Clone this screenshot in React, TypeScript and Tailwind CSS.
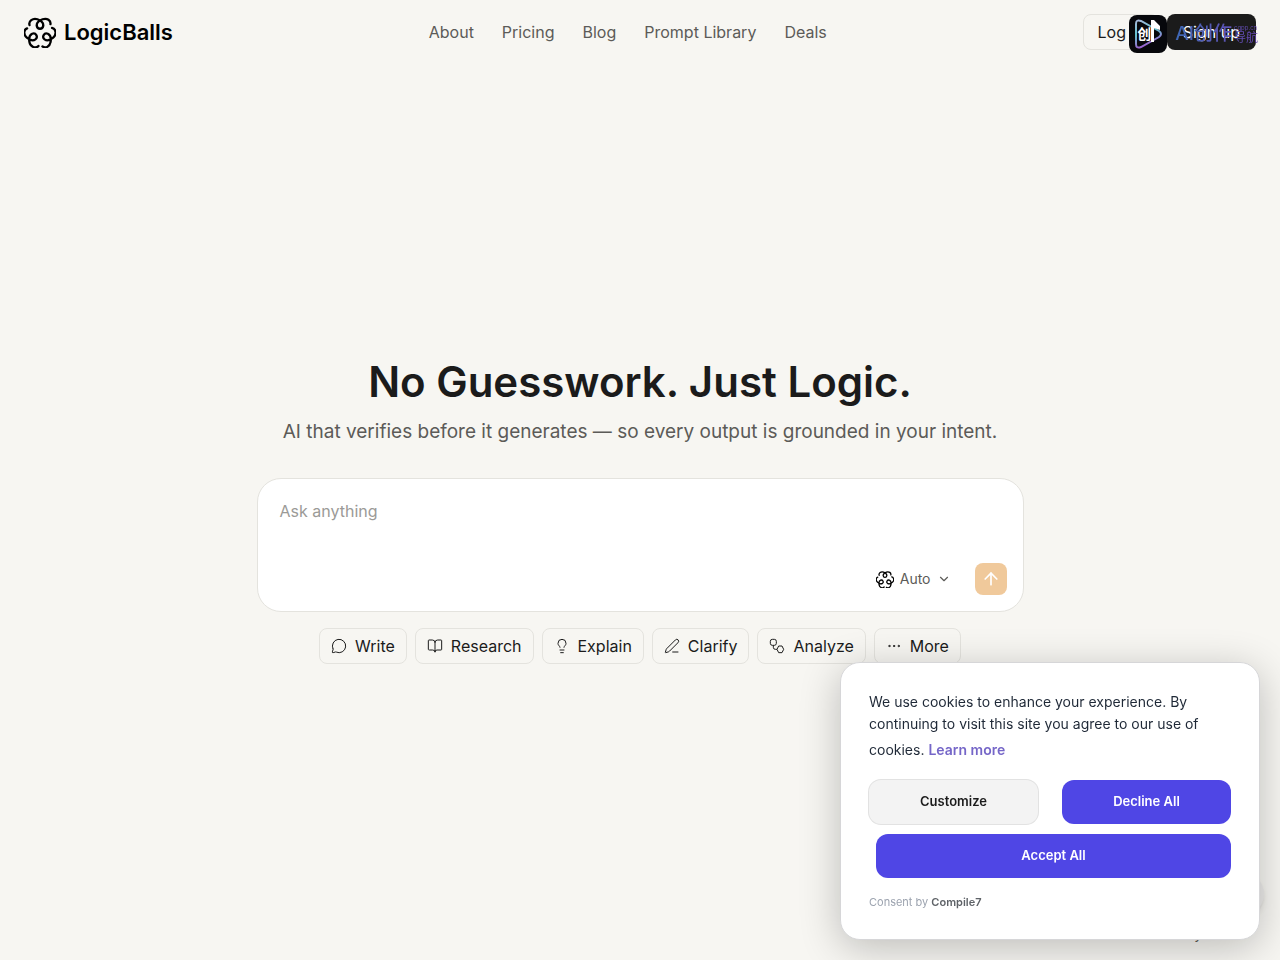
import { ArrowUp, BookOpen, ChevronDown, Ellipsis, Lightbulb, MessageCircle, PenLine } from 'lucide-react';

const navLinks = ['About', 'Pricing', 'Blog', 'Prompt Library', 'Deals'];

const Nodes = ({ className, strokeWidth }: { className?: string; strokeWidth?: number }) => (
  <svg viewBox="0 0 24 24" className={className} fill="none" stroke="currentColor" strokeWidth={strokeWidth} strokeLinejoin="round" aria-hidden="true">
    <rect x="2" y="2" width="9" height="9" rx="3" />
    <path d="M6.5 11 V14 Q6.5 17 9.5 17 H12" />
    <path d="M14.5 12 H19.5 L22 17 L19.5 22 H14.5 L12 17 Z" />
  </svg>
);

const prompts = [
  { label: 'Write', icon: MessageCircle },
  { label: 'Research', icon: BookOpen },
  { label: 'Explain', icon: Lightbulb },
  { label: 'Clarify', icon: PenLine },
  { label: 'Analyze', icon: Nodes },
  { label: 'More', icon: Ellipsis },
];

const strand =
  'M16 24 C12 12 26 1 40 6 C51 10 59 17 58 26 C57 32 53 35 48 35 C43 35 39 32 38 26 C37 17 45 10 56 6 C70 1 82 10 80 21';

// one looped strand, repeated three times around the centre
const LogoMark = ({ className }: { className: string }) => (
  <svg viewBox="-1 0 98 93" className={className} fill="none" stroke="currentColor" strokeWidth="7" strokeLinecap="round" aria-hidden="true">
    <path d={strand} />
    <path d={strand} transform="rotate(120 48 48)" />
    <path d={strand} transform="rotate(240 48 48)" />
  </svg>
);

const Watermark = () => (
  <div className="pointer-events-none absolute top-[15px] right-[22px] flex items-center gap-2">
    <div className="relative flex size-[38px] items-center justify-center rounded-lg bg-[#07080c]">
      <svg viewBox="0 0 38 38" className="absolute inset-0" fill="none" aria-hidden="true">
        <defs>
          <linearGradient id="play" x1="0" y1="0" x2="0.3" y2="1">
            <stop offset="0" stopColor="#a7b8dc" />
            <stop offset="0.5" stopColor="#62c3cf" />
            <stop offset="1" stopColor="#a05ccf" />
          </linearGradient>
        </defs>
        <path d="M7 9 Q7 4 12 6 L30 16 Q34 19 30 22 L12 32 Q7 34 7 29 Z" stroke="url(#play)" strokeWidth="2" />
        <path d="M22 5 H25 L31 11 V15 L25 13 V27 H22 Z" fill="#fff" />
      </svg>
      <span className="relative mr-2 text-sm font-bold text-white">创</span>
    </div>
    <div className="flex items-center gap-0.5 bg-linear-to-r from-[#3d68b4] to-[#6845b5] bg-clip-text text-transparent">
      <span className="text-[19px] leading-6 font-medium">AI创作</span>
      <span className="flex flex-col text-xs leading-3">
        <span className="text-[6px] leading-2">cgpp.cn</span>
        导航
      </span>
    </div>
  </div>
);

const Header = () => (
  <header className="relative flex h-16 items-center justify-between px-6">
    <a href="#" className="flex items-center gap-2 text-black">
      <LogoMark className="h-[31px] w-8" />
      <span className="text-[22px] leading-7 font-semibold">LogicBalls</span>
    </a>
    <nav className="flex gap-7">
      {navLinks.map((link) => (
        <a key={link} href="#" className="text-[#5c5b58]">
          {link}
        </a>
      ))}
    </nav>
    <div className="flex gap-2">
      <button className="h-9 rounded-lg border border-[#e4e3de] px-3.5">Log in</button>
      <button className="h-9 rounded-lg bg-[#1b1b1b] px-4 text-white">Sign up</button>
    </div>
    <Watermark />
  </header>
);

const CookieBanner = () => (
  <section
    aria-label="Cookie consent"
    className="fixed right-5 bottom-5 w-[420px] rounded-[20px] border border-[#d6d6d8] bg-white p-7 shadow-[0_8px_40px_rgba(0,0,0,0.24)]"
  >
    <p className="text-sm leading-[22px] text-[#1f2937]">
      We use cookies to enhance your experience. By continuing to visit this site you agree to our use of cookies.
      <a href="#" className="ml-1 inline-block py-1 font-semibold text-[#7566c8]">
        Learn more
      </a>
    </p>
    <div className="mt-[15px] flex gap-6 text-[13px] font-semibold">
      <button className="h-11 flex-1 rounded-xl bg-[#f3f3f3] text-[#1b1b1b] ring-1 ring-[#e2e2e2]">Customize</button>
      <button className="h-11 flex-1 rounded-xl bg-[#4f46e5] text-white">Decline All</button>
    </div>
    <div className="mt-2.5 flex pl-[7px] text-[13px] font-semibold">
      <button className="h-11 flex-1 rounded-xl bg-[#4f46e5] text-white">Accept All</button>
    </div>
    <p className="mt-4 text-[11px] leading-[17px] text-[#9ca3af]">
      Consent by{' '}
      <a href="#" className="font-semibold text-[#5f6368]">
        Compile7
      </a>
    </p>
  </section>
);

export default function App() {
  return (
    <div className="relative flex min-h-screen flex-col bg-[#f7f6f2] font-['Inter','Noto_Sans_CJK_SC',sans-serif] text-[#1b1b1b]">
      <Header />
      <main className="flex flex-1 flex-col items-center justify-center px-6 pb-0.5">
        <h1 className="text-[42px] leading-12 font-semibold">No Guesswork. Just Logic.</h1>
        <p className="mt-3 text-[19px] leading-7 text-[#5c5b58]">
          AI that verifies before it generates — so every output is grounded in your intent.
        </p>
        <form className="mt-8 w-full max-w-[767px] rounded-3xl border border-[#e4e3de] bg-white p-4 pt-5">
          <textarea
            aria-label="Ask anything"
            placeholder="Ask anything"
            className="block h-16 w-full resize-none px-1.5 outline-none placeholder:text-[#9b9a97]"
          />
          <div className="flex items-center justify-end gap-6">
            <button type="button" className="flex items-center text-sm text-[#5c5b58]">
              <LogoMark className="mr-1.5 h-[17px] w-[18px] text-black" />
              Auto
              <ChevronDown className="ml-1.5 size-3.5" />
            </button>
            <button type="button" aria-label="Send" className="flex size-8 items-center justify-center rounded-lg bg-[#f0c99b] text-white">
              <ArrowUp className="size-5" />
            </button>
          </div>
        </form>
        <div className="mt-4 flex flex-wrap justify-center gap-2">
          {prompts.map(({ label, icon: Icon }) => (
            <button key={label} className="flex h-9 items-center gap-2 rounded-lg border border-[#e4e3de] px-[11px]">
              <Icon className="size-4" strokeWidth={1.5} />
              {label}
            </button>
          ))}
        </div>
      </main>
      <a href="#" className="absolute right-[78px] bottom-4 text-sm text-[#5c5b58]">
        Privacy
      </a>
      <button aria-label="Help" className="fixed right-4 bottom-11 size-11 rounded-full bg-[#ecebea] shadow-md" />
      <CookieBanner />
    </div>
  );
}
